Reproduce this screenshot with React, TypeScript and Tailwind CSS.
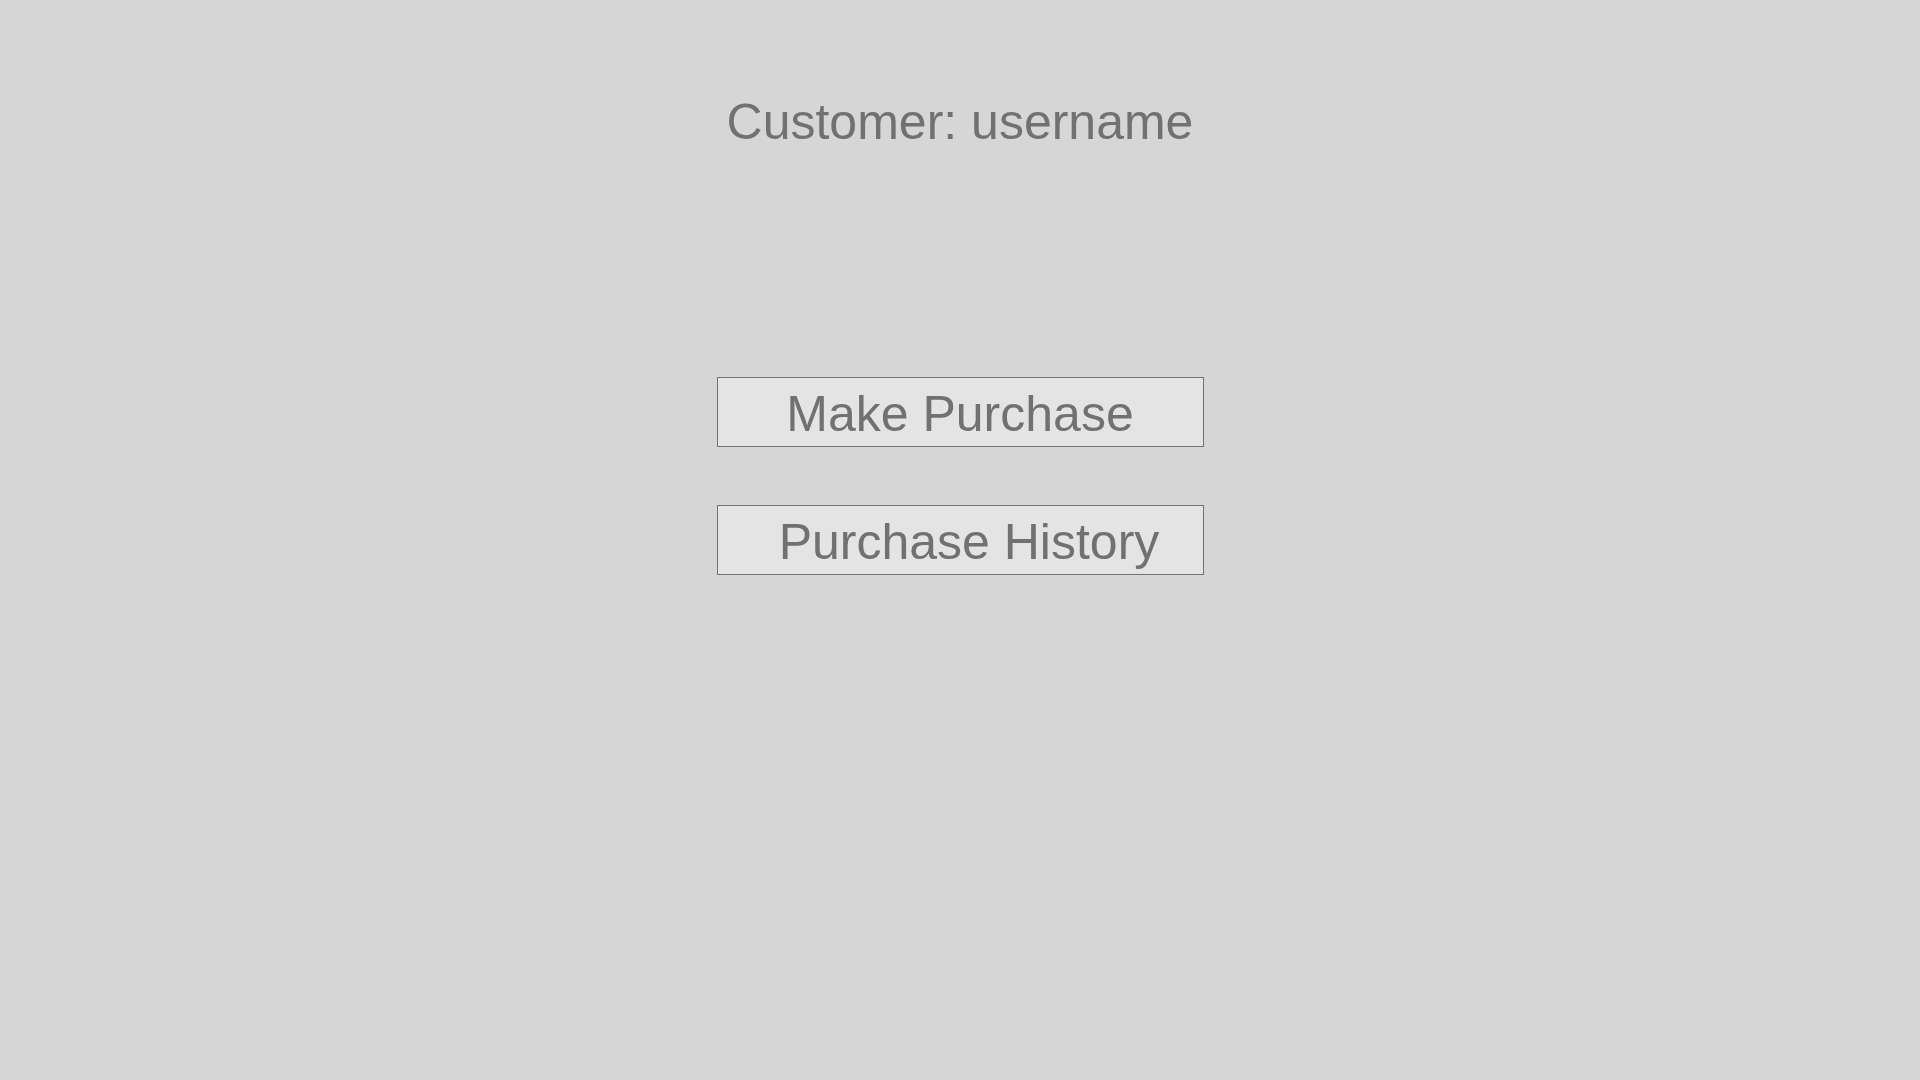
export default function App() {
  return (
    <div
      className="min-h-screen w-full bg-[#d6d6d6] flex flex-col items-center text-[#717171]"
      style={{ fontFamily: '"Liberation Sans", Arial, sans-serif' }}
    >
      <h1 className="mt-[97px] text-[50px] leading-none">Customer: username</h1>

      <div className="mt-[230px] flex flex-col gap-[58px]">
        <button className="w-[487px] h-[70px] bg-[#e4e4e4] border border-[#717171] text-[50px] leading-none pt-[3px]">
          Make Purchase
        </button>
        <button className="w-[487px] h-[70px] bg-[#e4e4e4] border border-[#717171] text-[50px] leading-none pt-[3px] pl-[18px]">
          Purchase History
        </button>
      </div>
    </div>
  );
}
